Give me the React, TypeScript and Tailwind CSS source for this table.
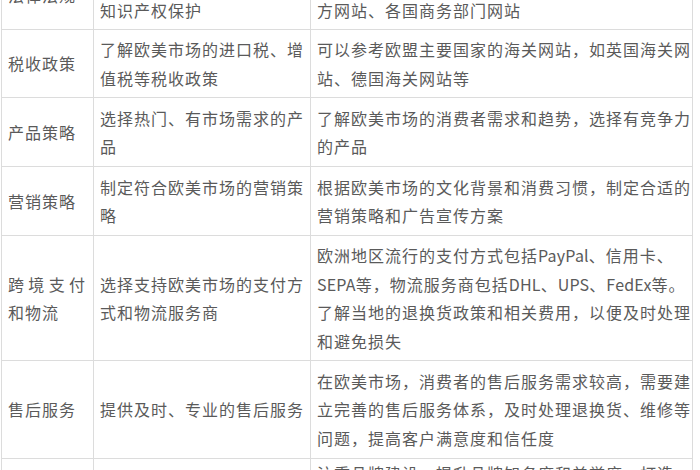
import React from "react";

type Row = {
  label: string[];
  justify?: boolean;
  mid: string[];
  right: string[];
  h: string;
};

const rows: Row[] = [
  {
    label: ["法律法规"],
    mid: ["了解欧美市场的法律法规和", "知识产权保护"],
    right: ["可以参考欧盟、美国政府的官", "方网站、各国商务部门网站"],
    h: "h-[68px]",
  },
  {
    label: ["税收政策"],
    mid: ["了解欧美市场的进口税、增", "值税等税收政策"],
    right: ["可以参考欧盟主要国家的海关网站，如英国海关网", "站、德国海关网站等"],
    h: "h-[68px]",
  },
  {
    label: ["产品策略"],
    mid: ["选择热门、有市场需求的产", "品"],
    right: ["了解欧美市场的消费者需求和趋势，选择有竞争力", "的产品"],
    h: "h-[69px]",
  },
  {
    label: ["营销策略"],
    mid: ["制定符合欧美市场的营销策", "略"],
    right: ["根据欧美市场的文化背景和消费习惯，制定合适的", "营销策略和广告宣传方案"],
    h: "h-[69px]",
  },
  {
    label: ["跨境支付", "和物流"],
    justify: true,
    mid: ["选择支持欧美市场的支付方", "式和物流服务商"],
    right: [
      "欧洲地区流行的支付方式包括PayPal、信用卡、",
      "SEPA等，物流服务商包括DHL、UPS、FedEx等。",
      "了解当地的退换货政策和相关费用，以便及时处理",
      "和避免损失",
    ],
    h: "h-[125px]",
  },
  {
    label: ["售后服务"],
    mid: ["提供及时、专业的售后服务"],
    right: [
      "在欧美市场，消费者的售后服务需求较高，需要建",
      "立完善的售后服务体系，及时处理退换货、维修等",
      "问题，提高客户满意度和信任度",
    ],
    h: "h-[98px]",
  },
];

function Line({ text }: { text: string }) {
  const parts = text.split(/([A-Za-z]+)/);
  return (
    <div className="whitespace-nowrap">
      {parts.map((p, i) =>
        /^[A-Za-z]+$/.test(p) ? (
          <span key={i} className="tracking-[0.2px]">
            {p}
          </span>
        ) : (
          <React.Fragment key={i}>{p}</React.Fragment>
        )
      )}
    </div>
  );
}

function Lines({ lines }: { lines: string[] }) {
  return (
    <div>
      {lines.map((l, i) => (
        <Line key={i} text={l} />
      ))}
    </div>
  );
}

export default function App() {
  return (
    <div className="w-[700px] h-[470px] overflow-hidden bg-white">
      <div
        className="ml-[1px] -mt-[38px] w-[691px] border-l border-[#dcdcdc] text-[16px] leading-[28.5px] tracking-[1px] text-[#5a5a5a]"
        style={{ fontFamily: '"Noto Sans CJK SC", "Noto Sans", sans-serif' }}
      >
        {rows.map((r, idx) => (
          <div key={idx} className={`grid grid-cols-[92px_217px_382px] ${r.h}`}>
            <div className="flex items-center border-r border-b border-[#dcdcdc] px-[6px]">
              {r.justify ? (
                <div className="w-[78px]">
                  <div className="flex justify-between">
                    {r.label[0].split("").map((c, i) => (
                      <span key={i}>{c}</span>
                    ))}
                  </div>
                  <div>{r.label[1]}</div>
                </div>
              ) : (
                <Lines lines={r.label} />
              )}
            </div>
            <div className="flex items-center border-r border-b border-[#dcdcdc] px-[6px]">
              <Lines lines={r.mid} />
            </div>
            <div className="flex items-center border-r border-b border-[#dcdcdc] px-[6px]">
              <Lines lines={r.right} />
            </div>
          </div>
        ))}
        <div className="grid grid-cols-[92px_217px_382px] h-[98px]">
          <div className="flex items-center border-r border-[#dcdcdc] px-[6px]">品牌建设</div>
          <div className="flex items-center border-r border-[#dcdcdc] px-[6px]">建立品牌形象</div>
          <div className="border-r border-[#dcdcdc] px-[6px]">
            <Lines lines={["注重品牌建设，提升品牌知名度和美誉度，打造", "具有国际竞争力的品牌"]} />
          </div>
        </div>
      </div>
    </div>
  );
}
